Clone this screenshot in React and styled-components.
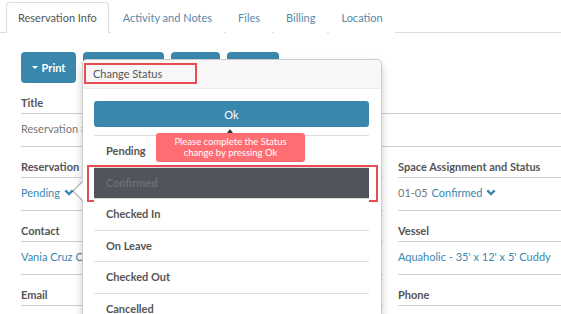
import React from 'react';
import styled, { createGlobalStyle } from 'styled-components';

const blue = '#3a87ad';
const line = '#cdd1d1';
const labelGrey = '#555';
const textGrey = '#777';

const GlobalStyle = createGlobalStyle`
  html, body {
    margin: 0;
    padding: 0;
    background: #fff;
    overflow: hidden;
  }
  body {
    font-family: Lato, "Open Sans", sans-serif;
    font-size: 11px;
    color: ${labelGrey};
  }
`;

const Page = styled.div`
  position: relative;
  width: 561px;
  height: 314px;
  overflow: hidden;
`;

const Tabs = styled.ul`
  display: flex;
  margin: 0;
  padding: 2px 0 0 6px;
  list-style: none;
  border-bottom: 1px solid #ddd;
`;

const Tab = styled.li`
  padding: 0 11px 1px;
  margin-right: 2px;
  margin-bottom: -1px;
  line-height: 29px;
  font-size: 11px;
  color: ${p => (p.$active ? '#555' : '#5b88a8')};
  border: 1px solid ${p => (p.$active ? '#ddd' : 'transparent')};
  border-bottom: none;
  border-radius: 4px 4px 0 0;
  background: #fff;
`;

const Content = styled.div`
  padding: 19px 0 0 21px;
`;

const ButtonRow = styled.div`
  display: flex;
  gap: 7px;
`;

const Button = styled.button`
  width: ${p => p.$w}px;
  height: 31px;
  border: none;
  border-radius: 4px;
  background: ${blue};
  color: #fff;
  font-family: inherit;
  font-size: 11px;
  font-weight: 700;
  padding: 0;
  display: flex;
  align-items: center;
  justify-content: center;
  gap: 4px;
`;

const Caret = styled.span`
  width: 0;
  height: 0;
  border-left: 3px solid transparent;
  border-right: 3px solid transparent;
  border-top: 3px solid #fff;
`;

const Grid = styled.div`
  display: grid;
  grid-template-columns: 362px 1fr;
  column-gap: 15px;
`;

const Field = styled.div`
  grid-column: ${p => (p.$full ? '1 / -1' : 'auto')};
`;

const Label = styled.div`
  padding: 13px 0 3px;
  line-height: 14px;
  font-weight: 700;
  color: ${labelGrey};
  border-bottom: 1px solid ${line};
  white-space: nowrap;
`;

const Value = styled.div`
  padding: 7px 0 10px;
  line-height: 15px;
  color: ${textGrey};
  border-bottom: 1px solid ${line};
  white-space: nowrap;
  display: flex;
  align-items: center;
  gap: 4px;
`;

const Link = styled.span`
  color: ${blue};
  display: inline-flex;
  align-items: center;
  gap: 4px;
`;

const Popover = styled.div`
  position: absolute;
  left: 82px;
  top: 59px;
  width: 298px;
  height: 290px;
  background: #fff;
  border: 1px solid rgba(0, 0, 0, 0.2);
  border-radius: 5px;
  box-shadow: 0 5px 10px rgba(0, 0, 0, 0.2);
  &::before,
  &::after {
    content: '';
    position: absolute;
    top: 121px;
    width: 0;
    height: 0;
    border-style: solid;
    border-color: transparent;
  }
  &::before {
    left: -11px;
    border-width: 10px 10px 10px 0;
    border-right-color: rgba(0, 0, 0, 0.25);
  }
  &::after {
    left: -9px;
    margin-top: 1px;
    border-width: 9px 9px 9px 0;
    border-right-color: #fff;
  }
`;

const PopoverHeader = styled.div`
  background: #f7f7f7;
  border-bottom: 1px solid #ebebeb;
  border-radius: 5px 5px 0 0;
  padding: 3px 1px 4px;
`;

const Marked = styled.span`
  display: block;
  box-sizing: border-box;
  width: 113px;
  height: 21px;
  padding-left: 7px;
  line-height: 17px;
  font-size: 11px;
  color: #555;
  border: 2px solid #e84b50;
`;

const PopoverBody = styled.div`
  position: relative;
  padding: 12px 12px 0 11px;
`;

const OkButton = styled.button`
  display: block;
  width: 100%;
  height: 26px;
  margin-bottom: 8px;
  border: none;
  border-radius: 3px;
  background: ${blue};
  color: #fff;
  font-family: inherit;
  font-size: 11px;
`;

const StatusItem = styled.div`
  position: relative;
  border-top: 1px solid #ddd;
  padding: 7px 12px 8px;
  line-height: 15.5px;
  font-weight: 700;
  color: ${p => (p.$selected ? '#6b6f75' : '#555')};
  background: ${p => (p.$selected ? '#50545b' : '#fff')};
  ${p =>
    p.$selected &&
    `&::after {
      content: '';
      position: absolute;
      left: -7px;
      right: -9px;
      top: -3px;
      bottom: -4px;
      border: 2px solid #e84b50;
    }`}
`;

const Tooltip = styled.div`
  position: absolute;
  left: 73px;
  top: 44px;
  width: 149px;
  padding: 3px 0 4px;
  border-radius: 3px;
  background: #ff6d72;
  color: #fff;
  font-size: 9.5px;
  line-height: 11px;
  text-align: center;
  z-index: 2;
  &::before {
    content: '';
    position: absolute;
    left: 71px;
    top: -4px;
    border-left: 3px solid transparent;
    border-right: 3px solid transparent;
    border-bottom: 4px solid #333;
  }
`;

const Chevron = () => (
  <svg width="10" height="7" viewBox="0 0 10 7">
    <path d="M1.3 1.3 L5 5 L8.7 1.3" fill="none" stroke={blue} strokeWidth="2.4" strokeLinejoin="miter" />
  </svg>
);

const statuses = ['Pending', 'Confirmed', 'Checked In', 'On Leave', 'Checked Out', 'Cancelled'];

export default function App() {
  return (
    <Page>
      <GlobalStyle />
      <Tabs>
        <Tab $active>Reservation Info</Tab>
        <Tab>Activity and Notes</Tab>
        <Tab>Files</Tab>
        <Tab>Billing</Tab>
        <Tab>Location</Tab>
      </Tabs>
      <Content>
        <ButtonRow>
          <Button $w={55}><Caret />Print</Button>
          <Button $w={81} />
          <Button $w={49} />
          <Button $w={52} />
        </ButtonRow>
        <Grid>
          <Field $full>
            <Label>Title</Label>
            <Value>Reservation #20417</Value>
          </Field>
          <Field>
            <Label>Reservation Status</Label>
            <Value><Link>Pending <Chevron /></Link></Value>
          </Field>
          <Field>
            <Label>Space Assignment and Status</Label>
            <Value>01-05 <Link>Confirmed <Chevron /></Link></Value>
          </Field>
          <Field>
            <Label>Contact</Label>
            <Value><Link>Vania Cruz Ortega</Link></Value>
          </Field>
          <Field>
            <Label>Vessel</Label>
            <Value><Link>Aquaholic - 35' x 12' x 5' Cuddy</Link></Value>
          </Field>
          <Field>
            <Label>Email</Label>
            <Value />
          </Field>
          <Field>
            <Label>Phone</Label>
            <Value />
          </Field>
        </Grid>
      </Content>
      <Popover>
        <PopoverHeader>
          <Marked>Change Status</Marked>
        </PopoverHeader>
        <PopoverBody>
          <OkButton>Ok</OkButton>
          <Tooltip>
            Please complete the Status
            <br />
            change by pressing Ok
          </Tooltip>
          {statuses.map(s => (
            <StatusItem key={s} $selected={s === 'Confirmed'}>{s}</StatusItem>
          ))}
        </PopoverBody>
      </Popover>
    </Page>
  );
}
